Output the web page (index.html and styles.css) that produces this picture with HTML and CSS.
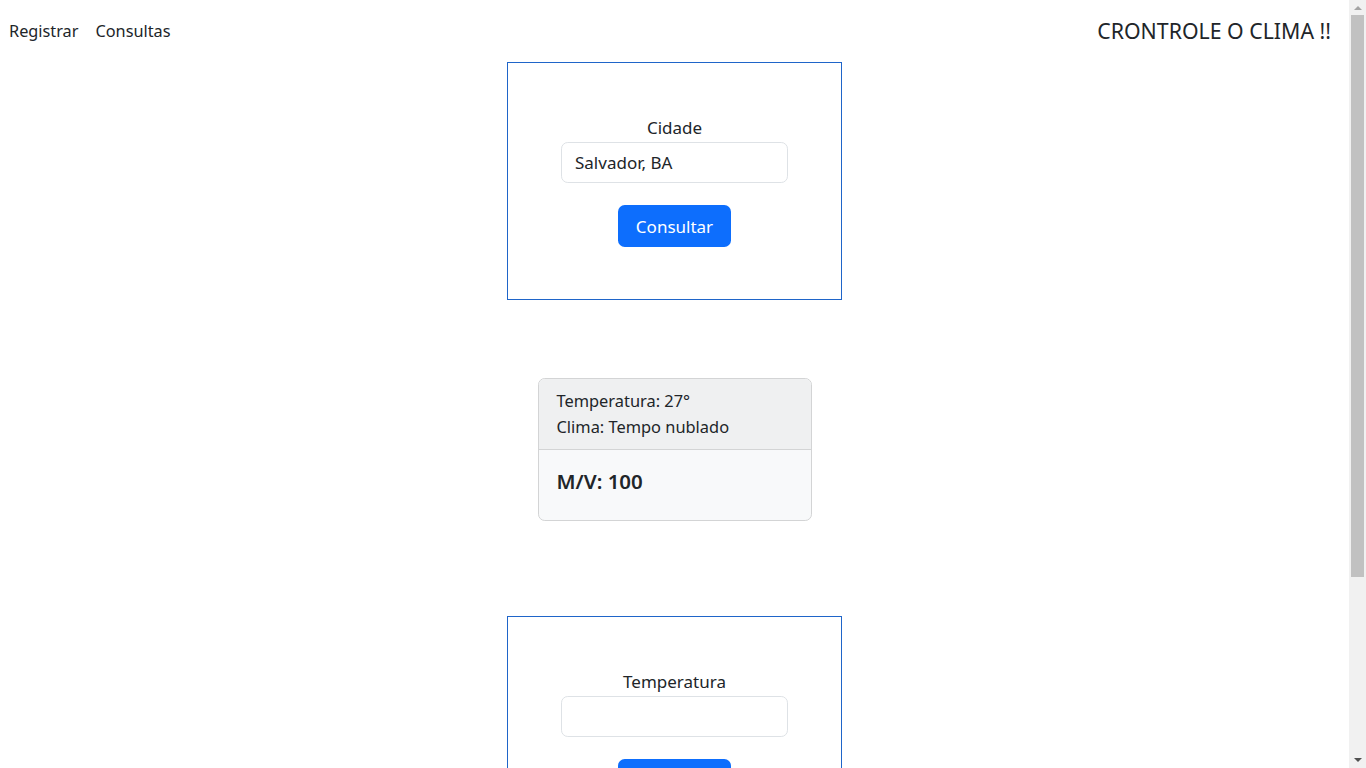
FILE: index.html
```html
<!DOCTYPE html>
<html lang="pt-BR">
<head>
<meta charset="utf-8">
<title>Controle o Clima</title>
<link rel="stylesheet" href="styles.css">
</head>
<body>
<div class="viewport">
  <nav class="topbar">
    <div class="links">
      <a class="link" href="#">Registrar</a>
      <a class="link" href="#">Consultas</a>
    </div>
    <div class="brand">CRONTROLE O CLIMA !!</div>
  </nav>
  <main class="page">
    <form class="box">
      <label class="label" for="cidade">Cidade</label>
      <input class="field" id="cidade" type="text" value="Salvador, BA">
      <button class="btn" type="button">Consultar</button>
    </form>

    <section class="card">
      <div class="card-header">
        <div>Temperatura: 27°</div>
        <div>Clima: Tempo nublado</div>
      </div>
      <div class="card-body">
        <h5 class="mv">M/V: 100</h5>
      </div>
    </section>

    <form class="box box-second">
      <label class="label" for="temp">Temperatura</label>
      <input class="field" id="temp" type="text">
      <button class="btn" type="button">Registrar</button>
    </form>
  </main>
</div>
<div class="scrollbar" aria-hidden="true">
  <div class="sb-arrow sb-up"></div>
  <div class="sb-track"><div class="sb-thumb"></div></div>
  <div class="sb-arrow sb-down"></div>
</div>
</body>
</html>
```

FILE: styles.css
```css
* { box-sizing: border-box; }
html { font-size: 18px; }
body {
  margin: 0;
  height: 100vh;
  overflow: hidden;
  display: flex;
  font-family: "Noto Sans", "Open Sans", sans-serif;
  font-size: 17px;
  line-height: 1.5;
  color: #212529;
  background: #fff;
}
.viewport {
  flex: 1;
  min-width: 0;
  overflow: hidden;
}
.topbar {
  height: 62px;
  display: flex;
  align-items: center;
  justify-content: space-between;
  padding: 0 18px 0 9px;
}
.links { display: flex; gap: 17px; }
.link {
  color: #212529;
  text-decoration: none;
  font-size: 16.3px;
}
.brand { font-size: 21.3px; color: #212529; }
.page {
  display: flex;
  flex-direction: column;
  align-items: center;
}
.box {
  width: 335px;
  height: 238px;
  border: 1px solid #1f65c9;
  display: flex;
  flex-direction: column;
  align-items: center;
  justify-content: flex-start;
  padding-top: 51px;
  margin: 0;
  flex: none;
}
.box-second { margin-top: 95px; }
.label { font-size: 17px; line-height: 28px; }
.field {
  width: 227px;
  height: 41px;
  border: 1px solid #dee2e6;
  border-radius: 6.75px;
  padding: 0 13px;
  font-family: inherit;
  font-size: 17px;
  color: #212529;
  background: #fff;
  outline: none;
}
.btn {
  margin-top: 22px;
  width: 113px;
  height: 42px;
  border: 0;
  border-radius: 6.75px;
  background: #0d6efd;
  color: #fff;
  font-family: inherit;
  font-size: 17px;
}
.card {
  margin-top: 78px;
  width: 274px;
  border: 1px solid #d3d4d5;
  border-radius: 6.75px;
  background: #f8f9fa;
  overflow: hidden;
  flex: none;
}
.card-header {
  background: #eff0f1;
  border-bottom: 1px solid #d3d4d5;
  padding: 9px 18px;
  line-height: 26px;
  font-size: 16.4px;
}
.card-body { padding: 18px; }
.mv {
  margin: 0 0 7px;
  font-size: 20.5px;
  font-weight: 600;
  line-height: 27px;
}
.scrollbar {
  width: 17px;
  flex: none;
  display: flex;
  flex-direction: column;
  background: #f1f1f1;
}
.sb-arrow {
  height: 15px;
  display: flex;
  align-items: center;
  justify-content: center;
  flex: none;
}
.sb-arrow::before {
  content: "";
  width: 0;
  height: 0;
  border-left: 4px solid transparent;
  border-right: 4px solid transparent;
}
.sb-up::before { border-bottom: 4px solid #a3a3a3; }
.sb-down { height: 17px; }
.sb-down::before { border-top: 4px solid #505050; }
.sb-track { flex: 1; padding: 0 2px; }
.sb-thumb {
  height: 562px;
  background: #c1c1c1;
}
```
